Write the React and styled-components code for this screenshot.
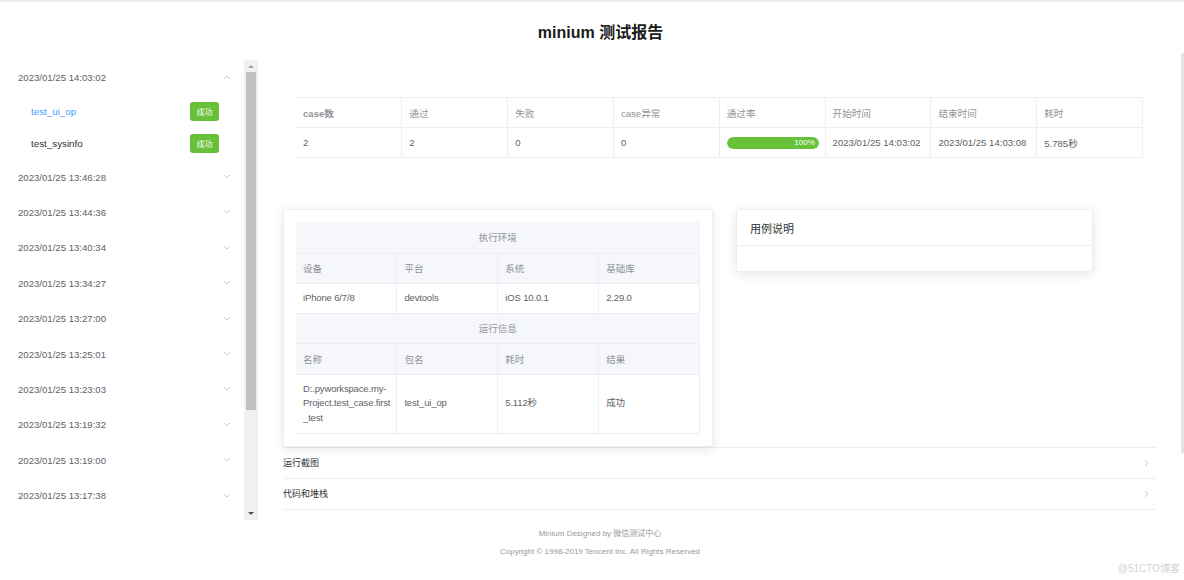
import React from 'react'
import styled, { createGlobalStyle } from 'styled-components'

const GlobalStyle = createGlobalStyle`
    html, body {
        margin: 0;
        padding: 0;
        background: #fff;
    }
    body {
        font-family: "Liberation Sans", "Noto Sans CJK SC", sans-serif;
        color: #606266;
    }
    * {
        box-sizing: border-box;
    }
`;

const runs = [
    '2023/01/25 14:03:02',
    '2023/01/25 13:46:28',
    '2023/01/25 13:44:36',
    '2023/01/25 13:40:34',
    '2023/01/25 13:34:27',
    '2023/01/25 13:27:00',
    '2023/01/25 13:25:01',
    '2023/01/25 13:23:03',
    '2023/01/25 13:19:32',
    '2023/01/25 13:19:00',
    '2023/01/25 13:17:38',
];

const cases = [
    { name: 'test_ui_op', active: true },
    { name: 'test_sysinfo', active: false },
];

const stats = {
    head: ['case数', '通过', '失败', 'case异常', '通过率', '开始时间', '结束时间', '耗时'],
    row: ['2', '2', '0', '0', null, '2023/01/25 14:03:02', '2023/01/25 14:03:08', '5.785秒'],
};

const Chevron = ({ dir = 'down' }) => {
    const d = dir === 'up' ? 'M1 5 L4 2 L7 5' : dir === 'right' ? 'M2 1 L5 4 L2 7' : 'M1 2 L4 5 L7 2';
    return (
        <svg width="8" height="8" viewBox="0 0 8 8">
            <path d={d} fill="none" stroke="#c0c4cc" strokeWidth="0.9" />
        </svg>
    );
};

const App = () => {
    return (
        <Page>
            <GlobalStyle />
            <Header>
                <Title>minium 测试报告</Title>
            </Header>
            <Body>
                <Sidebar>
                    <RunList>
                        {runs.map((run, i) => (
                            <React.Fragment key={run}>
                                <RunHeader>
                                    <span>{run}</span>
                                    <Chevron dir={i === 0 ? 'up' : 'down'} />
                                </RunHeader>
                                {i === 0 && cases.map(c => (
                                    <CaseRow key={c.name}>
                                        <CaseName $active={c.active}>{c.name}</CaseName>
                                        <Badge>成功</Badge>
                                    </CaseRow>
                                ))}
                            </React.Fragment>
                        ))}
                    </RunList>
                    <ScrollTrack>
                        <ArrowUp />
                        <Thumb />
                        <Spacer />
                        <ArrowDown />
                    </ScrollTrack>
                </Sidebar>
                <Main>
                    <MainInner>
                        <StatsPanel>
                            <StatTable>
                                <thead>
                                    <tr>
                                        {stats.head.map(h => <StatHead key={h}>{h}</StatHead>)}
                                    </tr>
                                </thead>
                                <tbody>
                                    <tr>
                                        {stats.row.map((v, i) => (
                                            <StatCell key={i}>
                                                {v === null ? (
                                                    <Progress>
                                                        <ProgressFill style={{ width: '100%' }}>100%</ProgressFill>
                                                    </Progress>
                                                ) : v}
                                            </StatCell>
                                        ))}
                                    </tr>
                                </tbody>
                            </StatTable>
                        </StatsPanel>

                        <CardRow>
                            <EnvCard>
                                <EnvTable>
                                    <tbody>
                                        <tr style={{ height: 31 }}>
                                            <GroupHead colSpan={4}>执行环境</GroupHead>
                                        </tr>
                                        <tr style={{ height: 30 }}>
                                            <EnvHead>设备</EnvHead>
                                            <EnvHead>平台</EnvHead>
                                            <EnvHead>系统</EnvHead>
                                            <EnvHead>基础库</EnvHead>
                                        </tr>
                                        <tr style={{ height: 30 }}>
                                            <EnvCell>iPhone 6/7/8</EnvCell>
                                            <EnvCell>devtools</EnvCell>
                                            <EnvCell>iOS 10.0.1</EnvCell>
                                            <EnvCell>2.29.0</EnvCell>
                                        </tr>
                                        <tr style={{ height: 30 }}>
                                            <GroupHead colSpan={4}>运行信息</GroupHead>
                                        </tr>
                                        <tr style={{ height: 31 }}>
                                            <EnvHead>名称</EnvHead>
                                            <EnvHead>包名</EnvHead>
                                            <EnvHead>耗时</EnvHead>
                                            <EnvHead>结果</EnvHead>
                                        </tr>
                                        <tr style={{ height: 59 }}>
                                            <EnvCell>D:.pyworkspace.my-Project.test_case.first<wbr />_test</EnvCell>
                                            <EnvCell>test_ui_op</EnvCell>
                                            <EnvCell>5.112秒</EnvCell>
                                            <EnvCell>成功</EnvCell>
                                        </tr>
                                    </tbody>
                                </EnvTable>
                            </EnvCard>
                            <DescCard>
                                <DescHeader>用例说明</DescHeader>
                                <DescBody />
                            </DescCard>
                        </CardRow>

                        <Collapse>
                            <CollapseItem>
                                <span>运行截图</span>
                                <Chevron dir="right" />
                            </CollapseItem>
                            <CollapseItem>
                                <span>代码和堆栈</span>
                                <Chevron dir="right" />
                            </CollapseItem>
                        </Collapse>
                    </MainInner>
                    <MainScroll />
                </Main>
            </Body>
            <Footer>
                <div>Minium Designed by 微信测试中心</div>
                <div>Copyright © 1998-2019 Tencent Inc. All Rights Reserved</div>
            </Footer>
            <Watermark>@51CTO博客</Watermark>
        </Page>
    )
}

export default App

const Page = styled.div`
    position: relative;
    width: 1184px;
    height: 580px;
    overflow: hidden;
    border-top: 2px solid #ececec;
`;

const Header = styled.div`
    height: 58px;
    display: flex;
    align-items: center;
    justify-content: center;
    padding-left: 17px;
`;

const Title = styled.h1`
    margin: 0;
    font-size: 16px;
    font-weight: bold;
    color: #1a1a1a;
`;

const Body = styled.div`
    display: flex;
    height: 460px;
`;

const Sidebar = styled.div`
    width: 258px;
    height: 460px;
    display: flex;
    flex-shrink: 0;
`;

const RunList = styled.div`
    flex: 1;
    overflow: hidden;
`;

const RunHeader = styled.div`
    height: 35.4px;
    display: flex;
    align-items: center;
    justify-content: space-between;
    padding: 0 13px 0 18px;
    font-size: 9.6px;
    color: #606266;
`;

const CaseRow = styled.div`
    height: 32px;
    display: flex;
    align-items: center;
    justify-content: space-between;
    padding: 0 25px 0 31px;
    font-size: 9.8px;
`;

const CaseName = styled.span`
    color: ${p => p.$active ? '#409eff' : '#303133'};
`;

const Badge = styled.span`
    width: 29px;
    height: 19px;
    border-radius: 3px;
    background: #67c23a;
    color: #fff;
    font-size: 8px;
    display: flex;
    align-items: center;
    justify-content: center;
`;

const ScrollTrack = styled.div`
    width: 14px;
    background: #f1f1f1;
    display: flex;
    flex-direction: column;
    align-items: center;
`;

const ArrowUp = styled.div`
    margin: 5px 0 4px;
    width: 0;
    height: 0;
    border-left: 3px solid transparent;
    border-right: 3px solid transparent;
    border-bottom: 3px solid #a3a3a3;
`;

const Thumb = styled.div`
    width: 10px;
    height: 338px;
    background: #c1c1c1;
`;

const Spacer = styled.div`
    flex: 1;
`;

const ArrowDown = styled.div`
    margin: 0 0 5px;
    width: 0;
    height: 0;
    border-left: 3px solid transparent;
    border-right: 3px solid transparent;
    border-top: 3px solid #505050;
`;

const Main = styled.div`
    flex: 1;
    display: flex;
`;

const MainInner = styled.div`
    flex: 1;
    padding: 0 25px;
`;

const MainScroll = styled.div`
    width: 3px;
    margin-top: -7px;
    height: 400px;
    background: #e4e4e4;
`;

const StatsPanel = styled.div`
    padding: 37px 13px 0;
`;

const StatTable = styled.table`
    width: 100%;
    border-collapse: collapse;
    table-layout: fixed;
    font-size: 9.6px;
`;

const StatHead = styled.th`
    height: 30px;
    padding: 0 7px;
    text-align: left;
    font-weight: normal;
    color: #909399;
    border-top: 1px solid #ebeef5;
    border-bottom: 1px solid #ebeef5;
    border-right: 1px solid #ebeef5;

    &:first-child {
        font-weight: bold;
    }
`;

const StatCell = styled.td`
    height: 30px;
    padding: 0 7px;
    color: #606266;
    border-bottom: 1px solid #ebeef5;
    border-right: 1px solid #ebeef5;
    white-space: nowrap;
`;

const Progress = styled.div`
    width: 92px;
    height: 12px;
    border-radius: 6px;
    background: #ebeef5;
    overflow: hidden;
`;

const ProgressFill = styled.div`
    height: 100%;
    border-radius: 6px;
    background: #67c23a;
    color: #fff;
    font-size: 8px;
    line-height: 12px;
    text-align: right;
    padding-right: 4px;
`;

const CardRow = styled.div`
    display: flex;
    align-items: flex-start;
    gap: 23px;
    margin-top: 51px;
`;

const Card = styled.div`
    background: #fff;
    border: 1px solid #ebeef5;
    border-radius: 3px;
    box-shadow: 0 2px 12px rgba(0, 0, 0, 0.1);
`;

const EnvCard = styled(Card)`
    width: 430px;
    padding: 12px;
`;

const EnvTable = styled.table`
    width: 100%;
    border-collapse: collapse;
    table-layout: fixed;
    font-size: 9.5px;
`;

const GroupHead = styled.th`
    background: #f5f7fa;
    font-weight: normal;
    color: #909399;
    border-bottom: 1px solid #ebeef5;
`;

const EnvHead = styled.th`
    background: #f5f7fa;
    font-weight: normal;
    text-align: left;
    padding: 0 7px;
    color: #909399;
    border-bottom: 1px solid #ebeef5;
    border-right: 1px solid #ebeef5;
`;

const EnvCell = styled.td`
    padding: 0 1px 0 7px;
    color: #606266;
    line-height: 14.5px;
    letter-spacing: -0.15px;
    overflow-wrap: anywhere;
    border-bottom: 1px solid #ebeef5;
    border-right: 1px solid #ebeef5;
`;

const DescCard = styled(Card)`
    width: 357px;
`;

const DescHeader = styled.div`
    height: 36px;
    padding: 0 13px;
    display: flex;
    align-items: center;
    font-size: 11px;
    color: #303133;
    border-bottom: 1px solid #ebeef5;
`;

const DescBody = styled.div`
    height: 25px;
`;

const Collapse = styled.div`
    border-top: 1px solid #ebeef5;
`;

const CollapseItem = styled.div`
    height: 31px;
    display: flex;
    align-items: center;
    justify-content: space-between;
    padding-right: 5px;
    font-size: 9px;
    color: #303133;
    border-bottom: 1px solid #ebeef5;
`;

const Footer = styled.div`
    padding: 5px 0 0 16px;
    text-align: center;
    font-size: 8px;
    line-height: 18px;
    color: #999;
`;

const Watermark = styled.div`
    position: absolute;
    right: 4px;
    bottom: 5px;
    font-size: 10px;
    color: #d2d2d2;
`;
